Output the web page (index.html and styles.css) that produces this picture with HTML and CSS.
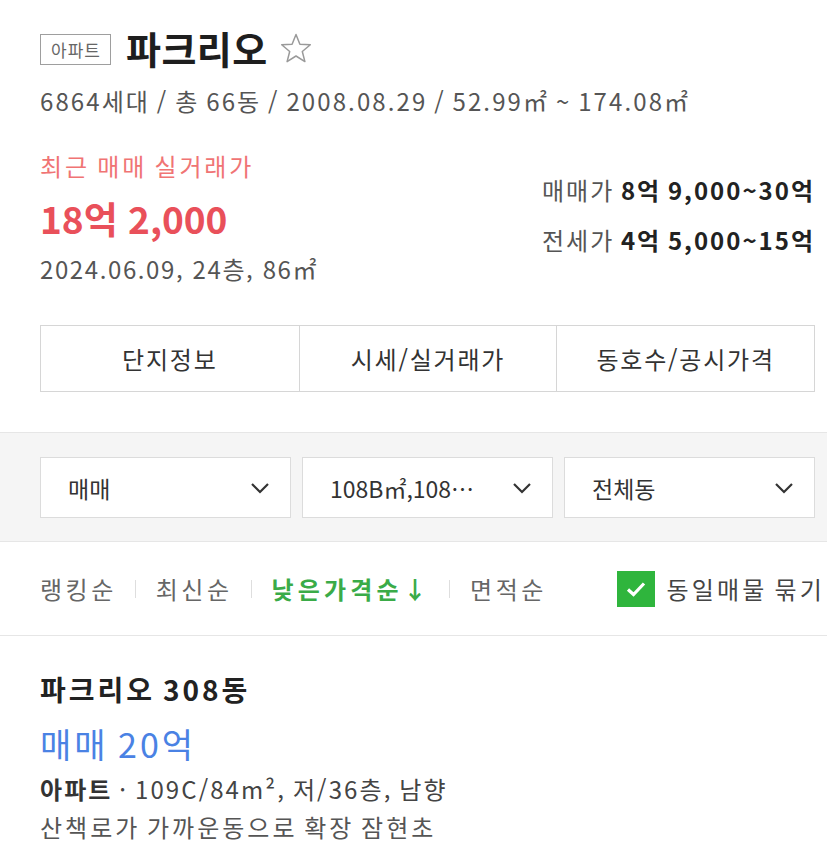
FILE: index.html
```html
<!DOCTYPE html>
<html lang="ko">
<head>
    <meta charset="UTF-8">
    <title>파크리오</title>
    <link rel="stylesheet" href="styles.css">
</head>
<body>
    <!-- 단지 요약 -->
    <div class="complex">
        <div class="title-row">
            <span class="badge">아파트</span>
            <h1 class="complex-name">파크리오</h1>
            <svg class="star" width="34" height="34" viewBox="0 0 34 34">
                <path d="M17 2.5 L20.9 12.2 L31.3 12.8 L23.3 19.5 L25.9 29.6 L17 24 L8.1 29.6 L10.7 19.5 L2.7 12.8 L13.1 12.2 Z" fill="none" stroke="#9a9a9a" stroke-width="1.5" stroke-linejoin="round"/>
            </svg>
        </div>
        <p class="meta">6864세대 / 총 66동 / 2008.08.29 / 52.99㎡ ~ 174.08㎡</p>

        <div class="price-area">
            <div class="recent">
                <p class="recent-label">최근 매매 실거래가</p>
                <p class="recent-price">18억 2,000</p>
                <p class="recent-date">2024.06.09, 24층, 86㎡</p>
            </div>
            <div class="ranges">
                <p class="range"><span class="range-label">매매가</span> <b>8억 9,000~30억</b></p>
                <p class="range"><span class="range-label">전세가</span> <b>4억 5,000~15억</b></p>
            </div>
        </div>

        <div class="tabs">
            <div class="tab">단지정보</div>
            <div class="tab">시세/실거래가</div>
            <div class="tab">동호수/공시가격</div>
        </div>
    </div>

    <!-- 필터 -->
    <div class="filters">
        <div class="select"><span>매매</span><svg class="chev" width="20" height="12" viewBox="0 0 20 12"><path d="M2 2 L10 10 L18 2" fill="none" stroke="#333" stroke-width="2.2"/></svg></div>
        <div class="select"><span>108B㎡,108…</span><svg class="chev" width="20" height="12" viewBox="0 0 20 12"><path d="M2 2 L10 10 L18 2" fill="none" stroke="#333" stroke-width="2.2"/></svg></div>
        <div class="select"><span>전체동</span><svg class="chev" width="20" height="12" viewBox="0 0 20 12"><path d="M2 2 L10 10 L18 2" fill="none" stroke="#333" stroke-width="2.2"/></svg></div>
    </div>

    <!-- 정렬 -->
    <div class="sort-bar">
        <ul class="sort-list">
            <li>랭킹순</li>
            <li>최신순</li>
            <li class="active">낮은가격순↓</li>
            <li>면적순</li>
        </ul>
        <label class="bundle">
            <span class="checkbox">
                <svg width="22" height="18" viewBox="0 0 22 18"><path d="M3 9.5 L8.5 14.5 L19 3.5" fill="none" stroke="#fff" stroke-width="3.2"/></svg>
            </span>
            동일매물 묶기
        </label>
    </div>

    <!-- 매물 -->
    <div class="article">
        <p class="article-title">파크리오 308동</p>
        <p class="article-price">매매 20억</p>
        <p class="article-spec"><b>아파트</b> · 109C/84m², 저/36층, 남향</p>
        <p class="article-desc">산책로가 가까운동으로 확장 잠현초</p>
    </div>
</body>
</html>
```

FILE: styles.css
```css
* {
    box-sizing: border-box;
    margin: 0;
    padding: 0;
}

body {
    font-family: "Noto Sans CJK KR", "Noto Sans", sans-serif;
    background-color: #fff;
    color: #222;
    width: 827px;
    overflow: hidden;
}

.complex {
    padding: 28px 12px 40px 40px;
}

.title-row {
    display: flex;
    align-items: center;
    height: 40px;
}

.badge {
    display: inline-block;
    border: 1px solid #9e9e9e;
    color: #666;
    font-size: 17px;
    letter-spacing: 1px;
    line-height: 29px;
    padding: 0 9px 0 10px;
    margin-top: 2px;
}

.complex-name {
    font-size: 38px;
    font-weight: 700;
    letter-spacing: 0.5px;
    color: #1e1e1e;
    margin-left: 15px;
    line-height: 40px;
}

.star {
    margin-left: 11px;
    margin-top: 2px;
}

.meta {
    margin-top: 18px;
    font-size: 24px;
    letter-spacing: 2.1px;
    word-spacing: -2px;
    line-height: 30px;
    color: #555;
}

.price-area {
    display: flex;
    justify-content: space-between;
    margin-top: 36px;
}

.recent-label {
    font-size: 24px;
    letter-spacing: 2.8px;
    word-spacing: -2px;
    line-height: 28px;
    color: #f07474;
}

.recent-price {
    margin-top: 16px;
    font-size: 37px;
    line-height: 44px;
    font-weight: 700;
    color: #e9505a;
}

.recent-date {
    margin-top: 15px;
    font-size: 24px;
    letter-spacing: 1.6px;
    line-height: 28px;
    color: #555;
}

.ranges {
    text-align: right;
    padding-top: 23px;
}

.range {
    font-size: 24px;
    letter-spacing: 2px;
    word-spacing: -2px;
    line-height: 30px;
    color: #222;
}

.range + .range {
    margin-top: 20px;
}

.range-label {
    color: #555;
}

.range b {
    font-weight: 700;
}

.tabs {
    display: grid;
    grid-template-columns: repeat(3, 1fr);
    margin-top: 42px;
    border: 1px solid #d6d6d6;
}

.tab {
    height: 65px;
    display: flex;
    align-items: center;
    justify-content: center;
    font-size: 24px;
    letter-spacing: 1.8px;
    color: #333;
}

.tab + .tab {
    border-left: 1px solid #d6d6d6;
}

.filters {
    display: flex;
    gap: 11px;
    background-color: #f5f5f5;
    border-top: 1px solid #e6e6e6;
    border-bottom: 1px solid #e6e6e6;
    padding: 24px 12px 23px 40px;
}

.select {
    flex: 1;
    height: 61px;
    background-color: #fff;
    border: 1px solid #dcdcdc;
    display: flex;
    align-items: center;
    justify-content: space-between;
    padding: 0 20px 0 27px;
    font-size: 23px;
    color: #333;
}

.sort-bar {
    display: flex;
    align-items: center;
    justify-content: space-between;
    height: 94px;
    padding: 0 2px 0 40px;
    border-bottom: 1px solid #e6e6e6;
}

.sort-list {
    display: flex;
    list-style: none;
    font-size: 24px;
    letter-spacing: 3.5px;
    color: #666;
}

.sort-list li + li {
    margin-left: 18px;
    padding-left: 21px;
    position: relative;
}

.sort-list li + li::before {
    content: "";
    position: absolute;
    left: 0;
    top: 9px;
    height: 18px;
    border-left: 1px solid #dedede;
}

.sort-list .active {
    color: #3aab48;
    font-weight: 700;
    letter-spacing: 4.2px;
}

.bundle {
    display: flex;
    align-items: center;
    font-size: 24px;
    letter-spacing: 3.2px;
    word-spacing: -3px;
    color: #444;
}

.checkbox {
    width: 38px;
    height: 36px;
    background-color: #2fb53d;
    display: flex;
    align-items: center;
    justify-content: center;
    margin-right: 11px;
}

.article {
    padding: 36px 12px 0 40px;
}

.article-title {
    font-size: 28px;
    letter-spacing: 3px;
    word-spacing: -3px;
    line-height: 34px;
    font-weight: 700;
    color: #222;
}

.article-price {
    margin-top: 18px;
    font-size: 34px;
    letter-spacing: 3px;
    word-spacing: -3px;
    line-height: 40px;
    color: #4a82e4;
}

.article-spec {
    margin-top: 10px;
    font-size: 24px;
    letter-spacing: 2.1px;
    word-spacing: -2px;
    line-height: 30px;
    color: #444;
}

.article-spec b {
    font-weight: 700;
    color: #333;
}

.article-desc {
    margin-top: 8px;
    font-size: 24px;
    letter-spacing: 3px;
    word-spacing: -3px;
    line-height: 30px;
    color: #555;
}
```
